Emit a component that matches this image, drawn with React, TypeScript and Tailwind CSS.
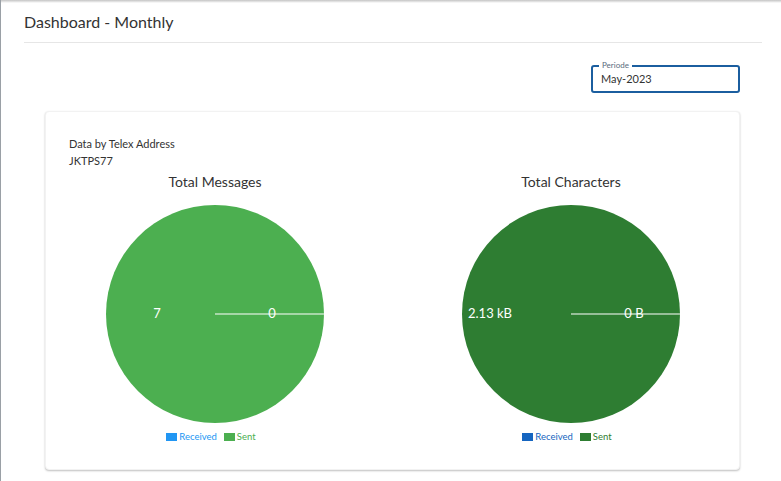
import React from 'react';

type Slice = { label: string; color: string };

type PieProps = {
  title: string;
  fill: string;
  leftLabel: string;
  leftX: number;
  rightLabel: string;
  rightX: number;
  legend: Slice[];
};

const PieCard: React.FC<PieProps> = ({ title, fill, leftLabel, leftX, rightLabel, rightX, legend }) => {
  return (
    <div className="flex w-[300px] flex-col items-center">
      <h4 className="text-[14px] leading-[20px] text-[#333]">{title}</h4>
      <svg width="220" height="220" viewBox="0 0 220 220" className="mt-[12px]">
        <circle cx="110" cy="110" r="109" fill={fill} />
        <line x1="110" y1="110" x2="219" y2="110" stroke="#ffffff" strokeWidth="1.2" />
        <text x={leftX} y="114" fill="#ffffff" fontSize="13" textAnchor="middle" fontFamily="Lato, sans-serif">
          {leftLabel}
        </text>
        <text x={rightX} y="114" fill="#ffffff" fontSize="13" textAnchor="middle" fontFamily="Lato, sans-serif">
          {rightLabel}
        </text>
      </svg>
      <div className="mr-[8px] mt-[6px] flex items-center gap-[7px] text-[9.5px] leading-[14px]">
        {legend.map((s) => (
          <div key={s.label} className="flex items-center gap-[2px]">
            <span className="inline-block h-[8px] w-[11px]" style={{ backgroundColor: s.color }} />
            <span style={{ color: s.color }}>{s.label}</span>
          </div>
        ))}
      </div>
    </div>
  );
};

export default function App() {
  return (
    <div className="min-h-[481px] w-[781px] border-l border-[#9aa0a6] bg-white font-['Lato','Noto_Sans',sans-serif]">
      <div className="h-[3px] bg-gradient-to-b from-[#c4c4c4] to-white" />
      <div className="ml-[23px] w-[738px] border-b border-[#e6e6e6] pb-[8px] pt-[7px]">
        <h2 className="text-[16px] leading-[24px] text-[#333]">Dashboard - Monthly</h2>
      </div>

      <div className="ml-[44px] w-[695px]">
        <div className="mt-[22px] flex justify-end">
          <div className="relative h-[28px] w-[149px] rounded-[3px] border-2 border-[#1b5e9f] px-[8px]">
            <span className="absolute left-[6px] top-[-7px] bg-white px-[3px] text-[8px] leading-[10px] text-[#5a6b7d]">
              Periode
            </span>
            <div className="pt-[5px] text-[11px] leading-[14px] text-[#333]">May-2023</div>
          </div>
        </div>

        <div className="mt-[18px] h-[359px] rounded-[4px] border border-[#f2f2f2] bg-white pt-[23px] shadow-[0_1px_2px_rgba(0,0,0,0.25)]">
          <div className="pl-[23px] text-[11px] leading-[17px] text-[#333]">
            <div>Data by Telex Address</div>
            <div>JKTPS77</div>
          </div>
          <div className="mt-[3px] flex gap-[56px] pl-[19px]">
            <PieCard
              title="Total Messages"
              fill="#4caf50"
              leftLabel="7"
              leftX={52}
              rightLabel="0"
              rightX={167}
              legend={[
                { label: 'Received', color: '#2196f3' },
                { label: 'Sent', color: '#4caf50' },
              ]}
            />
            <PieCard
              title="Total Characters"
              fill="#2e7d32"
              leftLabel="2.13 kB"
              leftX={29}
              rightLabel="0 B"
              rightX={173}
              legend={[
                { label: 'Received', color: '#1565c0' },
                { label: 'Sent', color: '#2e7d32' },
              ]}
            />
          </div>
        </div>
      </div>
    </div>
  );
}
